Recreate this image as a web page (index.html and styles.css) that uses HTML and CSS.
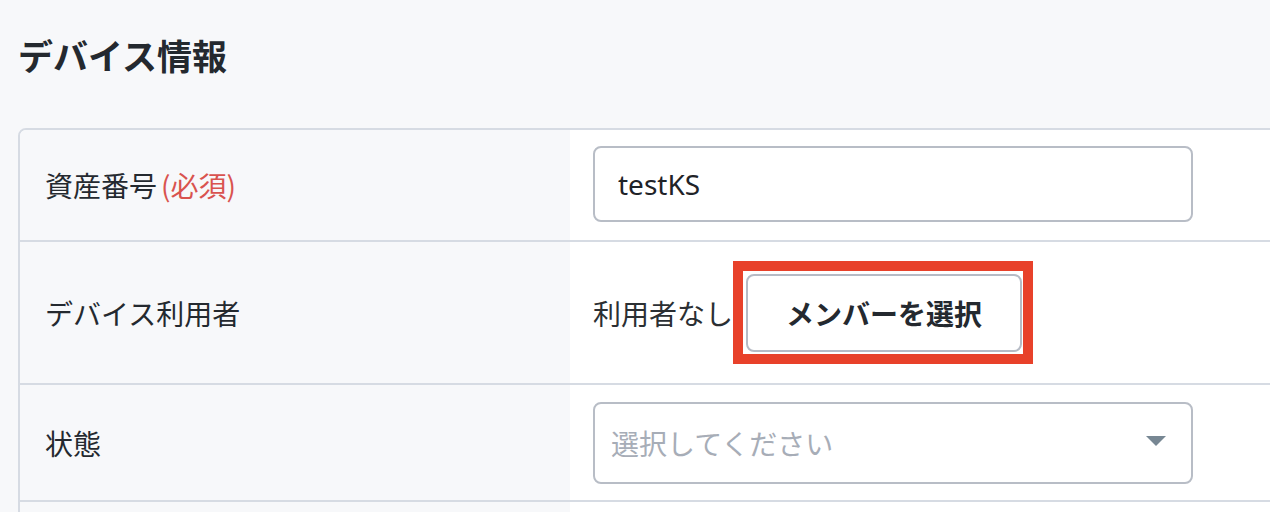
FILE: index.html
```html
<!DOCTYPE html>
<html lang="ja">
<head>
    <meta charset="UTF-8">
    <meta name="viewport" content="width=device-width, initial-scale=1.0">
    <title>デバイス情報</title>
    <link rel="stylesheet" href="styles.css">
</head>
<body>
    <div class="page">
        <h2>デバイス情報</h2>
        <div class="table">
            <div class="row row-asset">
                <div class="label">資産番号<span class="required">(必須)</span></div>
                <div class="value">
                    <input type="text" class="field" value="testKS">
                </div>
            </div>
            <div class="row row-user">
                <div class="label">デバイス利用者</div>
                <div class="value">
                    <span class="no-user">利用者なし</span>
                    <!-- highlight frame around the button -->
                    <span class="highlight">
                        <button type="button" class="member-btn">メンバーを選択</button>
                    </span>
                </div>
            </div>
            <div class="row row-status">
                <div class="label">状態</div>
                <div class="value">
                    <div class="select-wrap">
                        <select class="field select">
                            <option value="">選択してください</option>
                            <option value="active">利用中</option>
                            <option value="stock">在庫</option>
                        </select>
                        <span class="caret"></span>
                    </div>
                </div>
            </div>
            <div class="row row-empty">
                <div class="label"></div>
                <div class="value"></div>
            </div>
        </div>
    </div>
</body>
</html>
```

FILE: styles.css
```css
/* Device info form */
body {
    font-family: "Noto Sans CJK JP", "Noto Sans", sans-serif;
    background-color: #f7f8fa;
    color: #24292f;
    margin: 0;
    overflow: hidden;
}
.page {
    padding: 28px 0 0 18px;
}
h2 {
    margin: 0 0 46px;
    font-size: 35px;
    line-height: 54px;
    font-weight: 700;
}
.table {
    width: 1320px;
    border: 2px solid #d6dbe3;
    border-radius: 8px;
    background-color: #fff;
    overflow: hidden;
}
.row {
    display: grid;
    grid-template-columns: 550px 1fr;
    border-bottom: 2px solid #d6dbe3;
}
.label {
    display: flex;
    align-items: center;
    padding-left: 25px;
    background-color: #f7f8fa;
    font-size: 28px;
}
.required {
    color: #d9534f;
    margin-left: 4px;
}
.value {
    display: flex;
    align-items: center;
    padding: 16px 23px;
    font-size: 28px;
}
.row-asset .value {
    padding: 16px 23px 18px;
}
.row-user .value {
    height: 141px;
    box-sizing: border-box;
}
.row-status .value {
    padding: 17px 23px 16px;
}
.row-empty .value {
    height: 60px;
    box-sizing: border-box;
}
.field {
    box-sizing: border-box;
    width: 600px;
    height: 76px;
    padding: 0 23px;
    border: 2px solid #b8bdc6;
    border-radius: 8px;
    background-color: #fff;
    font-family: "Noto Sans", "Noto Sans CJK JP", sans-serif;
    font-size: 28px;
    color: #1f2328;
    outline: none;
}
.no-user {
    color: #2b2f33;
}
.highlight {
    display: inline-flex;
    margin: -13px 0;
    padding: 3px 1px 2px 3px;
    border: 10px solid #e8412a;
    background-color: #fff;
}
.member-btn {
    box-sizing: border-box;
    width: 276px;
    height: 78px;
    border: 2px solid #b6bbc5;
    border-radius: 8px;
    background-color: #fff;
    font-family: "Noto Sans CJK JP", sans-serif;
    font-size: 28px;
    font-weight: 700;
    color: #24292f;
    cursor: pointer;
}
.select-wrap {
    position: relative;
}
.select {
    appearance: none;
    -webkit-appearance: none;
    height: 82px;
    padding: 0 16px;
    font-family: "Noto Sans CJK JP", sans-serif;
    color: #a7adb7;
}
.caret {
    position: absolute;
    right: 27px;
    top: 34px;
    width: 0;
    height: 0;
    border-left: 10px solid transparent;
    border-right: 10px solid transparent;
    border-top: 10px solid #778793;
    pointer-events: none;
}
```
